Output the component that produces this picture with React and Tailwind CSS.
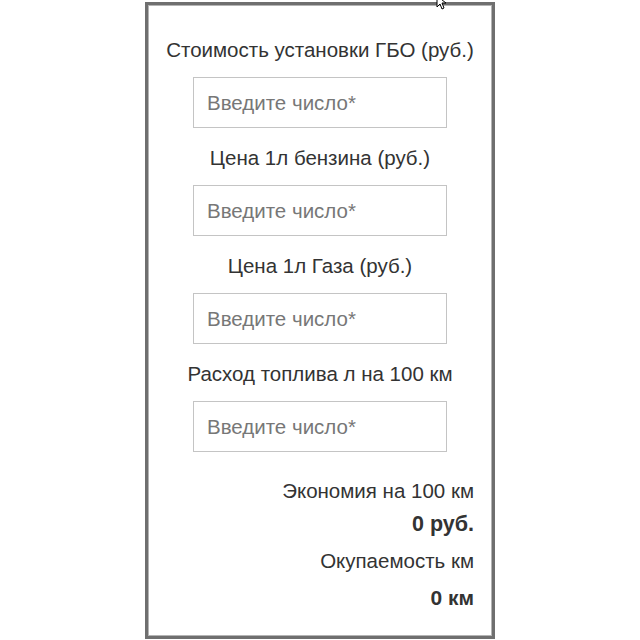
import React from "react";

const fields = [
  "Стоимость установки ГБО (руб.)",
  "Цена 1л бензина (руб.)",
  "Цена 1л Газа (руб.)",
  "Расход топлива л на 100 км",
];

export default function App() {
  return (
    <div className="relative w-full h-[640px] bg-white flex justify-center pt-[2px] [font-family:'Liberation_Sans',Arial,sans-serif]">
      <div className="w-[350px] h-[637px] border-[3px] border-[#6f6f6f] shadow-[inset_0_0_0_1px_#b4b4b4] bg-white flex flex-col px-[18px] pt-[33px]">
        {fields.map((label) => (
          <div key={label} className="flex flex-col items-center">
            <div className="text-[20.5px] leading-[24px] text-[#333] mb-[15px] whitespace-nowrap">
              {label}
            </div>
            <input
              type="text"
              placeholder="Введите число*"
              className="w-[254px] h-[51px] border border-[#c4c4c4] px-[13px] text-[20.5px] text-[#555] placeholder:text-[#777] outline-none mb-[18px]"
            />
          </div>
        ))}
        <div className="flex flex-col items-end text-right mt-[9px]">
          <div className="text-[20.5px] leading-[24px] text-[#333]">
            Экономия на 100 км
          </div>
          <div className="text-[21.5px] leading-[24px] font-bold text-[#333] mt-[9px]">
            0 руб.
          </div>
          <div className="text-[20.5px] leading-[24px] text-[#333] mt-[13px]">
            Окупаемость км
          </div>
          <div className="text-[21px] leading-[24px] font-bold text-[#333] mt-[13px]">
            0 км
          </div>
        </div>
      </div>
      <svg
        className="absolute left-[436px] top-[-5px]"
        width="14"
        height="16"
        viewBox="0 0 14 16"
      >
        <path d="M1 1 L1 12 L4 9 L6 14 L8 13 L6 8 L10 8 Z" fill="#fff" stroke="#000" strokeWidth="1" />
      </svg>
    </div>
  );
}
